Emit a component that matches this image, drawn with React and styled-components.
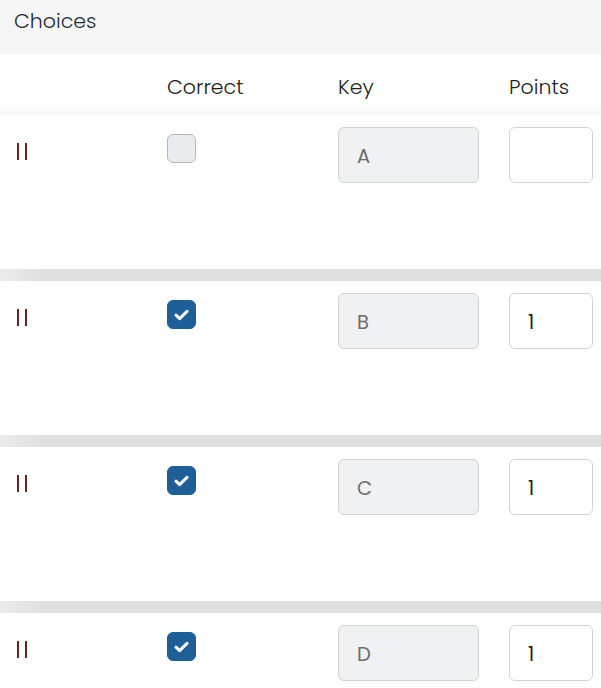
import React from 'react';
import styled, { createGlobalStyle } from 'styled-components';

const GlobalStyle = createGlobalStyle`
  html, body {
    margin: 0;
    padding: 0;
    background: #ffffff;
    overflow: hidden;
  }
  body {
    font-family: "Poppins", "Open Sans", "Noto Sans", sans-serif;
    font-weight: 300;
  }
`;

const choices = [
  { key: 'A', correct: false, points: '' },
  { key: 'B', correct: true, points: '1' },
  { key: 'C', correct: true, points: '1' },
  { key: 'D', correct: true, points: '1' },
];

const Panel = styled.div`
  width: 601px;
  display: flex;
  flex-direction: column;
`;

const TitleBar = styled.div`
  height: 54px;
  background: #f6f6f6;
  display: flex;
  align-items: center;
  padding: 0 14px;
  padding-bottom: 13px;
  box-sizing: border-box;
  font-size: 20.5px;
  color: #1f2a3c;
`;

const Columns = styled.div`
  display: grid;
  grid-template-columns: 151px 171px 171px 84px;
  padding-left: 16px;
`;

const HeaderRow = styled(Columns)`
  height: 61px;
  align-items: center;
  font-size: 20.5px;
  color: #222222;
  padding-top: 4px;
  box-sizing: border-box;
  background: linear-gradient(180deg, #ffffff 0, #ffffff 50px, #f7f7f7 61px);
`;

const List = styled.div`
  display: flex;
  flex-direction: column;
  gap: 12px;
  background: linear-gradient(90deg, #ececec 0, #e0e0e0 40px);
`;

const Row = styled(Columns)`
  height: 154px;
  background: #ffffff;
  padding-top: 12px;
  box-sizing: border-box;
  align-items: start;
`;

const Handle = styled.div`
  margin: 16px 0 0 1px;
  display: flex;
  gap: 6px;
  height: 17px;
  & span {
    width: 2px;
    height: 17px;
    background: #6b2424;
  }
`;

const Check = styled.div`
  margin-top: 7px;
  width: 29px;
  height: 29px;
  border-radius: 6px;
  box-sizing: border-box;
  display: flex;
  align-items: center;
  justify-content: center;
  background: ${p => (p.checked ? '#1f5f99' : '#e9ecef')};
  border: 1px solid ${p => (p.checked ? '#1f5f99' : '#b4b9be')};
`;

const Field = styled.div`
  height: 56px;
  box-sizing: border-box;
  border: 1px solid #d3d3d3;
  border-radius: 6px;
  display: flex;
  align-items: center;
  padding: 3px 0 0 18px;
  font-size: 19.5px;
  font-weight: 400;
  background: ${p => (p.disabled ? '#f0f1f3' : '#ffffff')};
  color: ${p => (p.disabled ? '#6e6e6e' : '#2a1d10')};
`;

const KeyField = styled(Field)`
  width: 141px;
`;

const PointsField = styled(Field)`
  width: 84px;
`;

const CheckMark = () => (
  <svg width="15" height="12" viewBox="0 0 15 12">
    <path d="M2 6.2 L5.6 9.6 L13 2.4" fill="none" stroke="#ffffff" strokeWidth="3" strokeLinecap="round" strokeLinejoin="round" />
  </svg>
);

const App = () => (
  <>
    <GlobalStyle />
    <Panel>
      <TitleBar>Choices</TitleBar>
      <HeaderRow>
        <div />
        <div>Correct</div>
        <div>Key</div>
        <div>Points</div>
      </HeaderRow>
      <List>
        {choices.map(choice => (
          <Row key={choice.key}>
            <Handle>
              <span />
              <span />
            </Handle>
            <div>
              <Check checked={choice.correct}>{choice.correct && <CheckMark />}</Check>
            </div>
            <KeyField disabled>{choice.key}</KeyField>
            <PointsField>{choice.points}</PointsField>
          </Row>
        ))}
      </List>
    </Panel>
  </>
);

export default App;
